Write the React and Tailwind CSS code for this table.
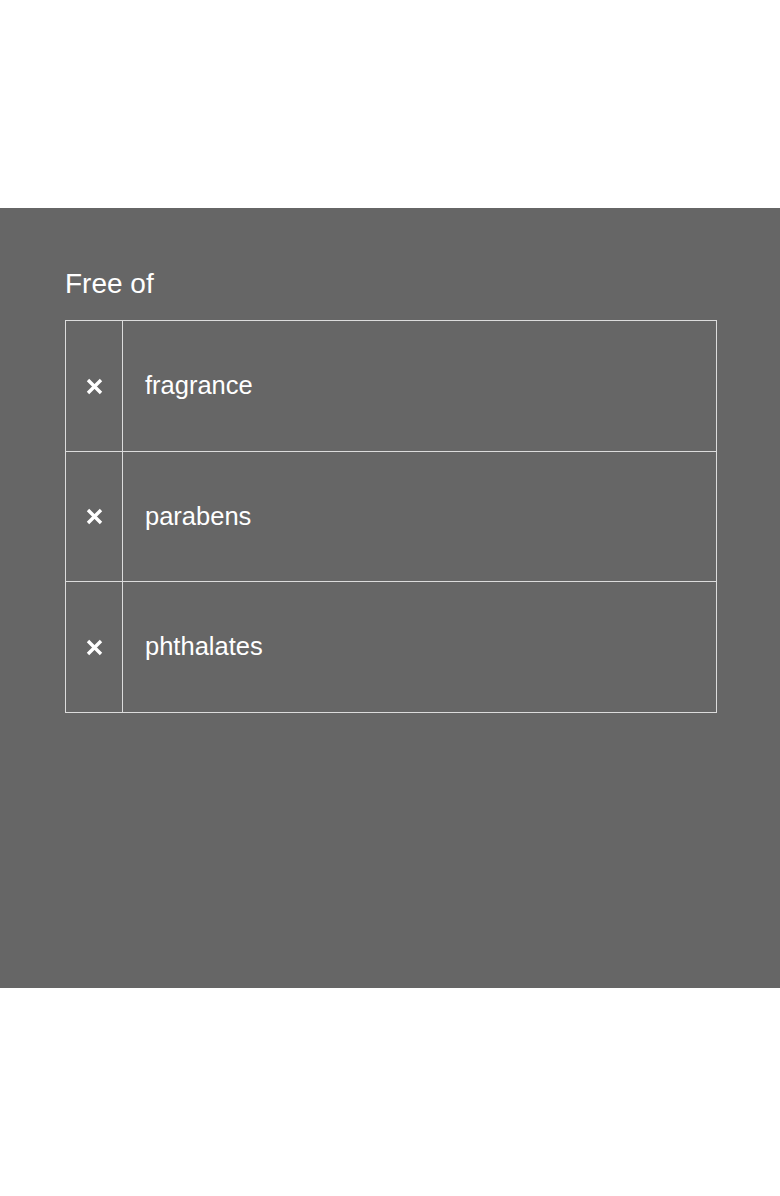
import React from 'react';

const items = ['fragrance', 'parabens', 'phthalates'];

const Cross = () => (
  <svg width="17" height="17" viewBox="0 0 17 17" className="block">
    <path d="M2 2 L15 15 M15 2 L2 15" stroke="#fff" strokeWidth="3.4" strokeLinecap="butt" fill="none" />
  </svg>
);

const App = () => {
  return (
    <div className="min-h-screen bg-white" style={{ fontFamily: '"Liberation Sans", Arial, sans-serif' }}>
      {/* Top spacer */}
      <div className="h-[208px]" />

      {/* Free of panel */}
      <div className="h-[780px] bg-[#666666] pl-[65px] pr-[63px] pt-[62px] text-white">
        <h2 className="text-[28px] leading-none mb-[22px] font-normal">Free of</h2>
        <div className="border border-[#dcdcdc]">
          {items.map((item, i) => (
            <div
              key={item}
              className={`flex ${i > 0 ? 'border-t border-[#dcdcdc]' : ''} ${i === 2 ? 'h-[131px]' : 'h-[130px]'}`}
            >
              <div className="w-[57px] flex items-center justify-center border-r border-[#dcdcdc]">
                <Cross />
              </div>
              <div className="flex items-center pl-[22px] text-[25.5px] leading-none">{item}</div>
            </div>
          ))}
        </div>
      </div>

      <div className="h-[208px]" />
    </div>
  );
};

export default App;
